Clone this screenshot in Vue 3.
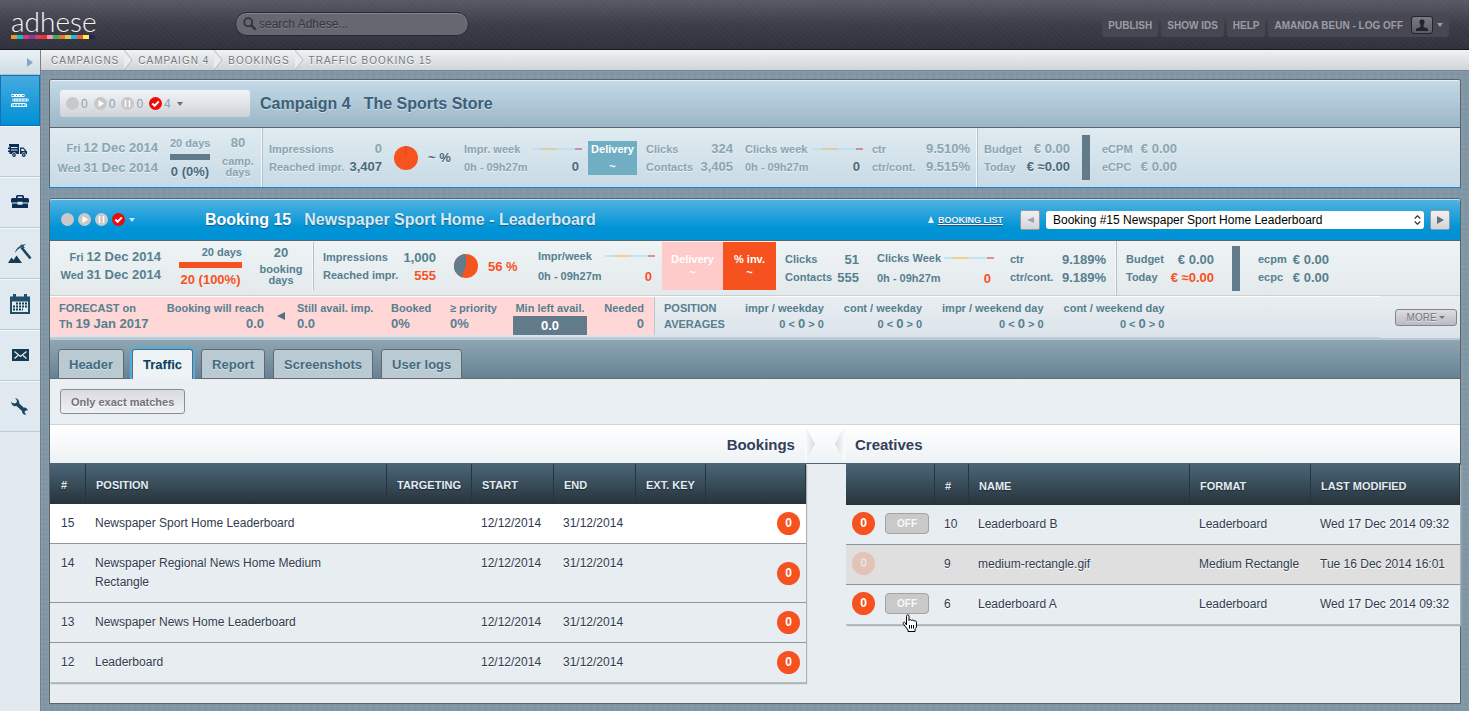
<script setup>
import { ref } from 'vue'

const search = ref('')
const selectedBooking = ref(15)

const crumbs = ['Campaigns', 'Campaign 4', 'Bookings', 'Traffic booking 15']
const tabs = ['Header', 'Traffic', 'Report', 'Screenshots', 'User logs']
const activeTab = ref('Traffic')

const stripes = [
  '#f7931e', '#00c4c4', '#ee2a7b', '#7f3f98', '#e0366d', '#ee3124', '#f48fb1',
  '#39b15a', '#f36f32', '#d9cf4a', '#1cbbe0', '#f15a3a', '#fff04d', '#262262'
]

const bookings = [
  { id: 15, position: 'Newspaper Sport Home Leaderboard' },
  { id: 14, position: 'Newspaper Regional News Home Medium Rectangle' },
  { id: 13, position: 'Newspaper News Home Leaderboard' },
  { id: 12, position: 'Leaderboard' }
]

const creatives = [
  { id: 10, name: 'Leaderboard B', format: 'Leaderboard', modified: 'Wed 17 Dec 2014 09:32', active: true },
  { id: 9, name: 'medium-rectangle.gif', format: 'Medium Rectangle', modified: 'Tue 16 Dec 2014 16:01', active: false },
  { id: 6, name: 'Leaderboard A', format: 'Leaderboard', modified: 'Wed 17 Dec 2014 09:32', active: true, hovered: true }
]

const averages = ['impr / weekday', 'cont / weekday', 'impr / weekend day', 'cont / weekend day']
const statuses = [
  { kind: 'idle', count: 0 },
  { kind: 'play', count: 0 },
  { kind: 'pause', count: 0 },
  { kind: 'done', count: 4 }
]
</script>

<template>
  <div class="app">
    <header class="topbar">
      <a class="logo" href="#">
        <span class="logo-name">adhese</span>
        <span class="logo-stripes"><i v-for="c in stripes" :key="c" :style="{ background: c }"></i></span>
      </a>
      <form class="search" @submit.prevent>
        <svg width="14" height="14" viewBox="0 0 14 14" fill="none" stroke="#33333b" aria-hidden="true">
          <circle cx="5.2" cy="5.2" r="4" stroke-width="1.8" />
          <path d="M8.3 8.3 12.6 12.6" stroke-width="2.6" />
        </svg>
        <input v-model="search" type="text" aria-label="Search" placeholder="search Adhese..." />
      </form>
      <nav class="topnav">
        <button type="button">PUBLISH</button>
        <button type="button">SHOW IDS</button>
        <button type="button">HELP</button>
        <button type="button" class="user">
          AMANDA BEUN - LOG OFF
          <span class="avatar">
            <svg width="14" height="13" viewBox="0 0 14 13" aria-hidden="true">
              <path d="M7 0.5c1.9 0 2.7 1.2 2.5 3-.1 1.3-1 2-1 2.700v1.800l4.500 1.800v2.200H1v-2.200l4.500-1.800V6.200c0-.7-.9-1.400-1-2.700C4.300 1.700 5.100.5 7 .5z" fill="#22222a" />
            </svg>
          </span>
          <span class="caret"></span>
        </button>
      </nav>
    </header>

    <div class="shell">
      <aside class="sidebar">
        <button class="toggle" type="button" aria-label="Expand menu">
          <svg width="6" height="9" viewBox="0 0 6 9"><path d="M0 0 6 4.500 0 9z" fill="#8aa5c8" /></svg>
        </button>
        <nav>
          <a href="#" class="active" aria-label="Campaigns">
            <svg width="18" height="15" viewBox="0 0 18 15">
              <g fill="none" stroke="#fff">
                <rect x="1" y="1.500" width="12" height="2" />
                <rect x="3.500" y="6" width="12" height="2" />
                <rect x="2" y="10.500" width="12" height="3" />
              </g>
              <path d="M3 2.500h8M5 7h9M4 12h8" stroke="#fff" stroke-dasharray="2 1" />
              <path d="M2 5.500v3M17 5.500v3M.5 10.500v3.500M15.500 10.500v3.500" stroke="#fff" />
            </svg>
          </a>
          <a href="#" aria-label="Deliveries">
            <svg width="24" height="14" viewBox="0 0 24 14" fill="#0b2c55">
              <path d="M1 0h10v10H8.500a2.500 2.500 0 0 0-4.800 0H1.500V8H0V6.500h1.500V5H0V3.500h1.500V2H1z" />
              <path d="M12 3.500h3.500L18.500 7l.5.500V10h-1a2.300 2.300 0 0 0-4.500 0H12z" />
              <circle cx="6" cy="11" r="1.900" /><circle cx="15.800" cy="11" r="1.900" />
              <path d="M13.200 4.700h1.900L17 7h-3.800zM3 3h6.500v.9H3zM3 5.500h6.500v.9H3z" fill="#e0eaf0" />
              <circle cx="6" cy="11" r=".7" fill="#e0eaf0" /><circle cx="15.800" cy="11" r=".7" fill="#e0eaf0" />
            </svg>
          </a>
          <a href="#" aria-label="Portfolio">
            <svg width="18" height="14" viewBox="0 0 18 14" fill="#0b2c55">
              <path d="M5 3V1.500Q5 0 6.500 0h5Q13 0 13 1.500V3h3.500Q18 3 18 4.500V7.500h-6.500v-.8h-5v.8H0v-3Q0 3 1.500 3zM6.700 3h4.600V1.600H6.700z" />
              <path d="M1 8.500h5.500v1.300h5V8.500H17V13H1z" />
            </svg>
          </a>
          <a href="#" aria-label="Mining">
            <svg width="24" height="21" viewBox="0 0 24 21">
              <path d="M0 20 3.500 14.500 5.500 17 8.500 12.500 14 20z" fill="#153a52" />
              <path d="M7 10C8 5.500 11 2.500 18 .8L14.500 4C11 5 9 7 7 10z" fill="#25566f" />
              <path d="M13.500 4.500 22.500 15.500" stroke="#1b455d" stroke-width="2.600" />
              <path d="M13 1.800 16 5.200" stroke="#25566f" stroke-width="2" />
            </svg>
          </a>
          <a href="#" aria-label="Calendar">
            <svg width="20" height="20" viewBox="0 0 20 20">
              <path d="M0 2.500h3V0h3v2.500h8V0h3v2.500h3V20H0z" fill="#1f4f69" />
              <path d="M2 7.500h16V18H2z" fill="#e4edf2" />
              <path d="M6 9.500h11M3 12.500h14M3 15.500h10" stroke="#153a52" stroke-width="2" stroke-dasharray="2 1" />
            </svg>
          </a>
          <a href="#" aria-label="Messages">
            <svg width="17" height="12" viewBox="0 0 17 12">
              <path d="M0 0h17v12H0z" fill="#153a52" />
              <path d="M2.500 2.500 8.500 7.500 14.500 2.500M2.500 9.500 6 6.500M14.500 9.500 11 6.500" fill="none" stroke="#e4edf2" stroke-width="1.300" />
            </svg>
          </a>
          <a href="#" aria-label="Settings">
            <svg width="19" height="17" viewBox="0 0 19 17">
              <path d="M4 .3 5.800 2v2.300L4.300 5.500 1.300 5 .3 3.500C-.2 6.500 2.500 8.800 5.500 8L11 13c0 2.500 2 4.200 4.500 3.600L13.800 15v-1.800l1.500-1 1.500.5c0-2.200-2-3.700-4.300-3.200L8.200 5.300C8.500 2.500 6.500.2 4 .3z" fill="#1a4560" />
            </svg>
          </a>
        </nav>
      </aside>

      <div class="content">
        <nav class="crumbs" aria-label="Breadcrumb">
          <template v-for="(c, i) in crumbs" :key="c">
            <svg v-if="i" class="crumb-sep" width="9" height="20" viewBox="0 0 9 20" aria-hidden="true">
              <path d="M0 0 8 10 0 20z" fill="#e9edef" /><path d="M0 0 8 10 0 20" fill="none" stroke="#b4babd" />
            </svg>
            <a href="#">{{ c }}</a>
          </template>
        </nav>

        <main>
          <section class="panel campaign">
            <header class="panel-head">
              <div class="status-box">
                <span v-for="s in statuses" :key="s.kind" class="status">
                  <svg width="13" height="13" viewBox="0 0 13 13">
                    <circle cx="6.500" cy="6.500" r="6.500" :fill="s.kind === 'done' ? '#ee0a0a' : '#c8c8c8'" />
                    <path v-if="s.kind === 'play'" d="M4.500 3 10 6.500 4.500 10z" fill="#fff" />
                    <path v-if="s.kind === 'pause'" d="M4.500 3v7M8.500 3v7" stroke="#fff" stroke-width="1.500" />
                    <path v-if="s.kind === 'done'" d="M3.300 6.500 5.600 8.800 9.800 4.400" fill="none" stroke="#fff" stroke-width="2" />
                  </svg>{{ s.count }}
                </span>
                <span class="caret"></span>
              </div>
              <h1><span>Campaign 4</span><span>The Sports Store</span></h1>
            </header>
            <div class="stats">
              <div class="dates"><p>Fri <b>12 Dec 2014</b></p><p>Wed <b>31 Dec 2014</b></p></div>
              <div class="progress"><p>20 days</p><i></i><p><b class="em">0 (0%)</b></p></div>
              <div class="total"><b>80</b><p>camp.<br />days</p></div>
              <div class="pair impressions ruled">
                <span>Impressions</span><b>0</b><span>Reached impr.</span><b class="em">3,407</b>
              </div>
              <svg class="pie" width="24" height="24" viewBox="0 0 24 24"><circle cx="12" cy="12" r="12" fill="#f6541f" /><path d="M12 0v10" stroke="#c2502c" /></svg>
              <b class="em percent">~ %</b>
              <div class="pair week">
                <span>Impr. week</span>
                <svg class="spark" width="50" height="2"><path d="M0 1h50" stroke="#a5dafa" /><path d="M9 1h16" stroke="#f7bd5b" /><path d="M43 1h7" stroke="#dd4150" /></svg>
                <span>0h - 09h27m</span><b class="em">0</b>
              </div>
              <div class="tile teal"><span>Delivery</span><span>~</span></div>
              <div class="pair clicks"><span>Clicks</span><b>324</b><span>Contacts</span><b>3,405</b></div>
              <div class="pair week">
                <span>Clicks week</span>
                <svg class="spark" width="50" height="2"><path d="M0 1h50" stroke="#a5dafa" /><path d="M9 1h16" stroke="#f7bd5b" /><path d="M43 1h7" stroke="#dd4150" /></svg>
                <span>0h - 09h27m</span><b class="em">0</b>
              </div>
              <div class="pair ctr"><span>ctr</span><b>9.510%</b><span>ctr/cont.</span><b>9.515%</b></div>
              <div class="pair budget ruled"><span>Budget</span><b>€ 0.00</b><span>Today</span><b class="em">€ ≈0.00</b></div>
              <i class="block"></i>
              <div class="pair ecp"><span>eCPM</span><b>€ 0.00</b><span>eCPC</span><b>€ 0.00</b></div>
            </div>
          </section>

          <section class="panel booking">
            <header class="panel-head">
              <div class="status-line">
                <svg v-for="s in statuses" :key="s.kind" width="13" height="13" viewBox="0 0 13 13">
                  <circle cx="6.500" cy="6.500" r="6.500" :fill="s.kind === 'done' ? '#ee0a0a' : '#c8c8c8'" />
                  <path v-if="s.kind === 'play'" d="M4.500 3 10 6.500 4.500 10z" fill="#fff" />
                  <path v-if="s.kind === 'pause'" d="M4.500 3v7M8.500 3v7" stroke="#fff" stroke-width="1.500" />
                  <path v-if="s.kind === 'done'" d="M3.300 6.500 5.600 8.800 9.800 4.400" fill="none" stroke="#fff" stroke-width="2" />
                </svg>
                <span class="caret"></span>
              </div>
              <h2><span>Booking 15</span><span>Newspaper Sport Home - Leaderboard</span></h2>
              <a class="list-link" href="#"><svg width="6" height="7" viewBox="0 0 6 7"><path d="M3 0 6 7H0z" fill="#e6f2f9" /></svg><span>BOOKING LIST</span></a>
              <button class="step" type="button" aria-label="Previous booking" disabled><svg width="7" height="6" viewBox="0 0 7 6"><path d="M7 0v6L0 3z" fill="#a2a2a8" /></svg></button>
              <div class="select">
                <select v-model="selectedBooking" aria-label="Booking">
                  <option v-for="b in bookings" :key="b.id" :value="b.id">Booking #{{ b.id }} {{ b.position }}</option>
                </select>
                <svg width="7" height="10" viewBox="0 0 7 10" fill="none" stroke="#333" stroke-width="1.200"><path d="M.7 3.500 3.500.8 6.300 3.500M.7 6.500 3.500 9.200 6.300 6.500" /></svg>
              </div>
              <button class="step" type="button" aria-label="Next booking"><svg width="7" height="8" viewBox="0 0 7 8"><path d="M0 0v8L7 4z" fill="#6b6e76" /></svg></button>
            </header>

            <div class="stats">
              <div class="lead">
                <div class="dates"><p>Fri <b>12 Dec 2014</b></p><p>Wed <b>31 Dec 2014</b></p></div>
                <div class="progress"><p>20 days</p><i></i><p><b class="em">20 (100%)</b></p></div>
                <div class="total"><b>20</b><p>booking<br />days</p></div>
                <div class="pair impressions ruled">
                  <span>Impressions</span><b>1,000</b><span>Reached impr.</span><b class="em">555</b>
                </div>
                <svg class="pie" width="24" height="24" viewBox="0 0 24 24"><circle cx="12" cy="12" r="12" fill="#f6541f" /><path d="M12 12V0a12 12 0 0 0-4.400 23.200z" fill="#627c8b" /></svg>
                <b class="em percent">56 %</b>
                <div class="pair week">
                  <span>Impr/week</span>
                  <svg class="spark" width="50" height="2"><path d="M0 1h50" stroke="#c3e4f7" stroke-width="2" /><path d="M9 1h16" stroke="#f1d08e" stroke-width="2" /><path d="M43 1h7" stroke="#e28f96" stroke-width="2" /></svg>
                  <span>0h - 09h27m</span><b class="em">0</b>
                </div>
                <div class="tile rose"><span>Delivery</span><span>~</span></div>
                <div class="tile orange"><span>% inv.</span><span>~</span></div>
              </div>
              <div class="pair clicks"><span>Clicks</span><b>51</b><span>Contacts</span><b>555</b></div>
              <div class="pair week">
                <span>Clicks Week</span>
                <svg class="spark" width="50" height="2"><path d="M0 1h50" stroke="#c3e4f7" stroke-width="2" /><path d="M9 1h16" stroke="#f1d08e" stroke-width="2" /><path d="M43 1h7" stroke="#e28f96" stroke-width="2" /></svg>
                <span>0h - 09h27m</span><b class="em">0</b>
              </div>
              <div class="pair ctr"><span>ctr</span><b>9.189%</b><span>ctr/cont.</span><b>9.189%</b></div>
              <div class="pair budget ruled"><span>Budget</span><b>€ 0.00</b><span>Today</span><b class="em">€ ≈0.00</b></div>
              <i class="block"></i>
              <div class="pair ecp"><span>ecpm</span><b>€ 0.00</b><span>ecpc</span><b>€ 0.00</b></div>
            </div>

            <div class="outlook">
              <div class="outlook-main">
                <div class="forecast">
                  <div class="f-date"><span>FORECAST on</span><span>Th <b>19 Jan 2017</b></span></div>
                  <div class="f-reach"><span>Booking will reach</span><b>0.0</b></div>
                  <svg width="8" height="8" viewBox="0 0 8 8"><path d="M8 0v8L0 4z" fill="#507384" /></svg>
                  <div class="f-avail"><span>Still avail. imp.</span><b>0.0</b></div>
                  <div class="f-booked"><span>Booked</span><b>0%</b></div>
                  <div class="f-priority"><span>≥ priority</span><b>0%</b></div>
                  <div class="f-min"><span>Min left avail.</span><b>0.0</b></div>
                  <div class="f-needed"><span>Needed</span><b>0</b></div>
                </div>
                <div class="averages">
                  <div class="a-label"><span>POSITION</span><span>AVERAGES</span></div>
                  <div v-for="a in averages" :key="a" class="a-item"><span>{{ a }}</span><span>0 &lt; <b>0</b> &gt; 0</span></div>
                </div>
              </div>
              <button class="more" type="button">MORE <span class="caret"></span></button>
            </div>

            <div class="tabs" role="tablist">
              <button v-for="t in tabs" :key="t" type="button" role="tab" :aria-selected="t === activeTab" :class="{ active: t === activeTab }" @click="activeTab = t">{{ t }}</button>
            </div>

            <div class="toolbar"><button type="button">Only exact matches</button></div>

            <div class="headings">
              <h3 class="left">Bookings</h3>
              <div class="chevrons" aria-hidden="true">
                <svg width="10" height="38" viewBox="0 0 10 38">
                  <defs><linearGradient id="chev-r"><stop offset="0" stop-color="#fbfcfd" /><stop offset="1" stop-color="#d5dde2" /></linearGradient></defs>
                  <path d="M0 0 10 19 0 38z" fill="url(#chev-r)" />
                </svg>
                <svg width="10" height="38" viewBox="0 0 10 38">
                  <defs><linearGradient id="chev-l"><stop offset="0" stop-color="#d5dde2" /><stop offset="1" stop-color="#fbfcfd" /></linearGradient></defs>
                  <path d="M10 0 0 19 10 38z" fill="url(#chev-l)" />
                </svg>
              </div>
              <h3 class="right">Creatives</h3>
            </div>

            <div class="tables">
              <div class="left">
                <table>
                  <colgroup><col class="w-id" /><col /><col class="w-target" /><col class="w-date" /><col class="w-date" /><col class="w-key" /><col class="w-last" /></colgroup>
                  <thead><tr><th>#</th><th>POSITION</th><th>TARGETING</th><th>START</th><th>END</th><th>EXT. KEY</th><th></th></tr></thead>
                  <tbody>
                    <tr v-for="b in bookings" :key="b.id" :class="{ selected: b.id === selectedBooking }">
                      <td>{{ b.id }}</td><td class="position">{{ b.position }}</td><td></td><td>12/12/2014</td><td>31/12/2014</td><td></td>
                      <td class="end"><span class="badge">0</span></td>
                    </tr>
                  </tbody>
                </table>
              </div>
              <div class="right">
                <table>
                  <colgroup><col class="w-actions" /><col class="w-num" /><col /><col class="w-format" /><col class="w-modified" /></colgroup>
                  <thead><tr><th></th><th>#</th><th>NAME</th><th>FORMAT</th><th>LAST MODIFIED</th></tr></thead>
                  <tbody>
                    <tr v-for="c in creatives" :key="c.id" :class="{ inactive: !c.active }">
                      <td class="actions">
                        <div class="action-row">
                          <span class="badge">0</span>
                          <button v-if="c.active" type="button">OFF</button>
                          <svg v-if="c.hovered" class="pointer" width="16" height="18" viewBox="0 0 16 18">
                            <path d="M4.500 11V2.300C4.500.3 7 .3 7 2.300V6.500c.3-1.300 2.400-1.200 2.500.2.500-1.100 2.400-.9 2.500.5.600-.8 2.500-.4 2.500 1V12c0 1.500-1 2.500-1.500 3.500V17.500H6V16C4.500 14 3 12 1.300 9.800.6 8.500 2.300 7.600 3.300 8.800z" fill="#fff" stroke="#000" stroke-linejoin="round" />
                            <path d="M7.500 11v3.500M9.500 11v3.500M11.500 11v3.500" stroke="#000" />
                          </svg>
                        </div>
                      </td>
                      <td>{{ c.id }}</td><td>{{ c.name }}</td><td>{{ c.format }}</td><td>{{ c.modified }}</td>
                    </tr>
                  </tbody>
                </table>
              </div>
            </div>
          </section>
        </main>
      </div>
    </div>
  </div>
</template>

<style>
body { margin: 0; }
</style>

<style scoped>
* { box-sizing: border-box; }
.app {
  min-height: 100vh;
  display: flex;
  flex-direction: column;
  font-family: "Liberation Sans", Arial, Helvetica, sans-serif;
  font-size: 11px;
  color: #55808f;
}
h1, h2, h3, p { margin: 0; }
button { font-family: inherit; padding: 0; border: 0; background: none; }
a { color: inherit; text-decoration: none; }
svg { display: block; flex: none; }
.caret {
  display: inline-block;
  border: 3px solid transparent;
  border-top: 4px solid currentColor;
  border-bottom: 0;
}

/* top bar */
.topbar {
  height: 50px;
  display: flex;
  align-items: flex-start;
  border-bottom: 1px solid #16161e;
  background:
    repeating-linear-gradient(45deg, rgba(255, 255, 255, 0.02) 0 2px, transparent 2px 4px),
    linear-gradient(#595965, #3b3c47 50%, #2e303b);
}
.logo { width: 84px; margin: 6px 0 0 11px; }
.logo-name {
  display: block;
  height: 29px;
  font: 300 28px/30px Lato, sans-serif;
  color: #f4f4f6;
}
.logo-stripes { display: flex; height: 4px; }
.logo-stripes i { flex: 1; }
.search {
  width: 234px;
  height: 24px;
  margin: 12px 0 0 140px;
  padding: 0 7px;
  display: flex;
  align-items: center;
  gap: 2px;
  border: 1px solid #26262e;
  border-radius: 12px;
  background: #676770;
  box-shadow: inset 0 1px 0 #85858d;
}
.search input {
  flex: 1;
  min-width: 0;
  padding: 0;
  border: 0;
  outline: 0;
  background: none;
  font: 12px "Liberation Sans", Arial, sans-serif;
  color: #34343b;
}
.search input::placeholder { color: #34343b; opacity: 1; text-shadow: 0 1px 0 #7e7e86; }
.topnav { margin: 13px 20px 0 auto; display: flex; gap: 3px; }
.topnav button {
  height: 24px;
  padding: 0 6px;
  display: flex;
  align-items: center;
  border-radius: 3px;
  background: #464751;
  font-size: 10px;
  font-weight: bold;
  color: #9a9ca8;
}
.avatar {
  width: 22px;
  height: 18px;
  margin: 0 4px 0 8px;
  display: flex;
  align-items: center;
  justify-content: center;
  border: 1px solid #24242c;
  border-radius: 3px;
  background: linear-gradient(#7a7a82, #5c5c65);
}

/* frame */
.shell { flex: 1; display: flex; }
.sidebar { width: 41px; border-right: 1px solid #76818f; background: #dfe9ef; }
.toggle {
  width: 100%;
  height: 25px;
  padding-right: 7px;
  display: flex;
  align-items: center;
  justify-content: flex-end;
  border-bottom: 1px solid #b9bfc4;
  background: linear-gradient(#eaf1f5, #cfdde6);
}
.sidebar nav a {
  height: 51px;
  display: flex;
  align-items: center;
  justify-content: center;
  border-bottom: 1px solid #b3cddb;
  box-shadow: inset 0 1px 0 #f3f8fa;
}
.sidebar nav a.active {
  border: 1px solid #0f74b4;
  background: linear-gradient(#45aae0, #0090d4);
  box-shadow: none;
}
.content { flex: 1; min-width: 0; display: flex; flex-direction: column; }
.crumbs {
  height: 21px;
  padding-left: 10px;
  display: flex;
  align-items: center;
  border-bottom: 1px solid #7d8390;
  background: linear-gradient(#f0f3f4, #cfd4d7);
  font-size: 10px;
  letter-spacing: 1px;
  text-transform: uppercase;
  color: #74787b;
  text-shadow: 0 1px 0 #fff;
}
.crumb-sep { margin: 0 5px; }
main {
  flex: 1;
  padding: 8px 8px 7px;
  display: flex;
  flex-direction: column;
  gap: 10px;
  background:
    repeating-linear-gradient(90deg, rgba(255, 255, 255, 0.04) 0 1px, transparent 1px 3px, rgba(40, 70, 90, 0.04) 3px 4px, transparent 4px 7px),
    repeating-linear-gradient(rgba(255, 255, 255, 0.03) 0 1px, transparent 1px 3px, rgba(40, 70, 90, 0.04) 3px 4px, transparent 4px 5px),
    #8197a6;
}
.panel { border: 1px solid #5d6468; border-radius: 3px 3px 0 0; }
.panel-head { display: flex; align-items: center; box-shadow: inset 0 1px 0 rgba(255, 255, 255, 0.6); border-radius: 2px 2px 0 0; border-bottom: 1px solid #5d6468; }
.panel-head h1, .panel-head h2 { display: flex; gap: 13px; font-size: 16px; line-height: 20px; white-space: nowrap; }

/* shared statistics strip */
.stats { display: flex; align-items: center; font-weight: bold; white-space: nowrap; }
.stats b, .outlook b { font-size: 13px; }
.stats > *, .lead > * { flex: none; }
.dates { text-align: right; }
.progress { text-align: center; line-height: 13px; }
.progress i { display: block; height: 6px; margin: 4px 0 5px; }
.total { text-align: center; line-height: 11px; }
.total b { display: block; }
.pair {
  display: grid;
  grid-template-columns: auto auto;
  grid-auto-rows: 18px;
  justify-content: space-between;
  align-content: center;
  align-items: center;
}
.pair b { text-align: right; }
.week b { padding-right: 3px; }
.block { background: #627b8a; height: 45px; }
.tile { display: flex; flex-direction: column; align-items: center; color: #fff; }

/* campaign */
.campaign { border-bottom-color: #1a86c4; }
.campaign .panel-head { height: 48px; padding-left: 10px; gap: 10px; background: linear-gradient(#c6dae7, #9ab6c8); }
.campaign h1 { color: #3b6078; text-shadow: 0 1px 0 #cfe0ea; }
.status-box {
  width: 190px;
  height: 27px;
  padding-left: 6px;
  display: flex;
  align-items: center;
  gap: 6px;
  border-radius: 3px;
  background: linear-gradient(#f2f3f6, #cfd3d9);
  font-size: 12px;
  color: #8da3af;
}
.status { display: flex; align-items: center; gap: 2px; }
.status-box .caret { color: #6d7079; }
.campaign .stats {
  height: 59px;
  background: linear-gradient(#e0ebf0, #c8dae6);
  color: #8aa5b0;
  text-shadow: 0 1px 0 #e9f1f5;
}
.campaign .em { color: #4a6a7b; }
.campaign .dates { width: 108px; line-height: 20px; }
.campaign .progress { width: 40px; margin-left: 12px; }
.campaign .progress i { background: #627b8a; }
.campaign .total { width: 40px; margin-left: 8px; }
.campaign .total b { margin-bottom: 8px; }
.ruled { border-left: 1px solid #b4c1c8; box-shadow: -1px 0 0 #f4f8fa; align-self: stretch; }
.campaign .impressions { width: 120px; margin-left: 4px; padding-left: 6px; }
.campaign .pie { margin-left: 12px; }
.campaign .percent { margin-left: 10px; width: 24px; }
.campaign .week { width: 118px; margin-left: 12px; }
.campaign .teal { width: 49px; height: 34px; margin-left: 6px; line-height: 17px; background: #70afc3; text-shadow: none; }
.campaign .clicks { width: 87px; margin-left: 9px; }
.campaign .ctr { width: 98px; margin-left: 9px; }
.campaign .budget { width: 93px; margin-left: 7px; padding-left: 6px; }
.campaign .block { width: 8px; margin-left: 12px; }
.campaign .ecp { width: 75px; margin-left: 12px; }

/* booking */
.booking { flex: 1; display: flex; flex-direction: column; background: linear-gradient(#eef3f6, #e7edf0 60%); }
.booking .panel-head { height: 42px; padding: 0 10px 0 11px; background: linear-gradient(#52b2e3, #0094d6 70%, #0090d4); }
.booking h2 { color: #fff; text-shadow: 0 1px 1px #1b5b80; }
.booking h2 span + span { color: #d6e9f3; }
.status-line { width: 144px; display: flex; align-items: center; gap: 4px; }
.status-line .caret { color: #cbe7f6; }
.list-link { margin-left: auto; display: flex; align-items: center; gap: 4px; font-size: 9px; font-weight: bold; color: #eef7fc; text-shadow: 0 1px 0 #1b5b80; }
.list-link span { text-decoration: underline; }
.step {
  width: 20px;
  height: 20px;
  display: flex;
  align-items: center;
  justify-content: center;
  border: 1px solid #8f99a3;
  border-radius: 2px;
  background: linear-gradient(#f1f1f4, #d3d4da);
}
.list-link + .step { margin-left: 17px; }
.select { position: relative; width: 378px; margin: 0 6px; }
.select select {
  display: block;
  width: 100%;
  height: 18px;
  padding: 0 20px 0 7px;
  appearance: none;
  border: 0;
  border-radius: 3px;
  background: #fff;
  font: 12px "Liberation Sans", Arial, sans-serif;
  color: #000;
}
.select svg { position: absolute; right: 3px; top: 4px; pointer-events: none; }
.booking .stats { height: 55px; border-bottom: 1px solid #c6d1d6; background: linear-gradient(#eef3f6, #e4eaec); }
.booking .em { color: #f6521f; }
.lead { align-self: flex-start; display: flex; align-items: center; height: 48px; margin-top: 1px; }
.booking .dates { width: 111px; line-height: 17px; }
.booking .progress { width: 63px; margin-left: 18px; }
.booking .progress i { margin: 3px 0 5px; background: #f6521f; }
.booking .progress p:first-child { text-align: right; }
.booking .total { width: 48px; margin-left: 15px; }
.booking .total b { margin-bottom: 6px; }
.booking .impressions { width: 123px; margin-left: 8px; padding-left: 9px; }
.booking .pie { margin-left: 18px; }
.booking .percent { width: 32px; margin-left: 10px; }
.booking .week { width: 117px; margin-left: 18px; grid-auto-rows: 20px; }
.booking .tile { height: 48px; line-height: 13px; justify-content: center; }
.booking .rose { width: 61px; margin-left: 7px; background: #ffcaca; }
.booking .orange { width: 53px; background: #f6521f; }
.booking .clicks { width: 74px; margin-left: 9px; }
.booking .ctr { width: 96px; margin-left: 16px; }
.booking .budget { width: 98px; margin-left: 10px; padding-left: 9px; }
.booking .block { width: 8px; margin-left: 18px; }
.booking .ecp { width: 71px; margin-left: 18px; }

/* forecast and position averages */
.outlook { display: flex; align-items: center; background: linear-gradient(#e9eef1, #dbe3ea); font-weight: bold; white-space: nowrap; }
.outlook-main { flex: 1; min-width: 0; height: 42px; display: flex; border-top: 1px solid #fff; border-bottom: 1px solid #c3d0da; }
.forecast { width: 604px; height: 38px; padding: 3px 0 0 9px; display: flex; background: #ffd7d7; }
.forecast > div, .averages > div { flex: none; display: flex; flex-direction: column; line-height: 16px; }
.forecast > svg { margin: 12px 12px 0 13px; }
.f-date { width: 100px; }
.f-reach { width: 105px; text-align: right; }
.f-avail { width: 94px; }
.f-booked { width: 59px; }
.f-priority { width: 63px; }
.f-min { width: 74px; text-align: center; }
.f-min b { height: 19px; line-height: 19px; background: #627b8a; color: #fff; }
.f-needed { width: 57px; text-align: right; }
.averages { height: 38px; padding: 3px 0 0 9px; display: flex; gap: 20px; border-left: 1px solid #b9c8d0; }
.a-item { text-align: right; }
.more {
  width: 62px;
  height: 17px;
  margin: 0 3px 0 15px;
  border: 1px solid #83858e;
  border-radius: 3px;
  background: linear-gradient(#dcdde0, #b9bbc1);
  font-size: 10px;
  color: #74767e;
  text-shadow: 0 1px 0 #e8e8ea;
}
.more .caret { vertical-align: 2px; border-width: 3px 3px 0; }

/* tabs */
.tabs {
  height: 41px;
  padding-left: 8px;
  display: flex;
  align-items: flex-end;
  gap: 8px;
  border-top: 2px solid #bccad4;
  box-shadow: inset 0 -1px 0 #5f6c73;
  background: linear-gradient(#8fa5b3, #648294);
}
.tabs button {
  height: 30px;
  padding: 0 10px;
  border: 1px solid #67676b;
  border-radius: 3px 3px 0 0;
  background: #b9cad3;
  font-size: 13px;
  font-weight: bold;
  color: #466a80;
  text-shadow: 0 1px 0 #d4e0e6;
}
.tabs button.active { border-bottom: 0; background: #eef3f6; color: #0c3f60; box-shadow: 0 -2px 0 #4caee4, -2px 0 0 #4caee4, 2px 0 0 #4caee4; clip-path: inset(-3px -3px 0 -3px); }
.toolbar { height: 45px; padding: 10px 10px 0; }
.toolbar button {
  height: 25px;
  padding: 0 10px;
  border: 1px solid #85919a;
  border-radius: 3px;
  background: linear-gradient(#dadbe0, #f0f1f4);
  font-size: 11px;
  font-weight: bold;
  color: #6f717b;
  text-shadow: 0 1px 0 #fff;
}
.headings { height: 40px; display: flex; align-items: center; border-top: 1px solid #c7d7df; border-bottom: 1px solid #4b6575; background: linear-gradient(#fff, #eef2f4); }
.headings h3 { font-size: 15px; color: #34405a; }
.left { flex: 756 1 0; min-width: 0; }
.right { flex: 614 1 0; min-width: 0; }
.headings .left { padding-right: 10px; text-align: right; }
.headings .right { padding-left: 10px; }
.chevrons { width: 40px; display: flex; justify-content: space-between; }

/* tables */
.tables { display: flex; align-items: flex-start; gap: 40px; }
table { width: 100%; table-layout: fixed; border-collapse: separate; border-spacing: 0; box-shadow: 1px 1px 1px #a9b3b8; font-size: 12px; color: #303a4e; }
th {
  height: 40px;
  padding: 2px 10px 0;
  text-align: left;
  font-size: 11px;
  color: #e3ecf2;
  text-shadow: 0 1px 1px #1c262c;
  white-space: nowrap;
  background: linear-gradient(#4b6677, #26333b);
  border-right: 1px solid #26343c;
}
.right th { height: 41px; }
td { padding: 10px 9px; line-height: 19px; vertical-align: top; border-bottom: 1px solid #8d969b; text-shadow: 0 1px 0 #fff; white-space: nowrap; }
.left td:first-child { padding-left: 11px; }
.left th:first-child { padding-left: 11px; }
.left td.position { padding-right: 60px; white-space: normal; }
tr:last-child td { border-bottom-color: #b5bfc4; }
.selected td { background: #fff; }
.inactive td { background: #dfdfdf; }
td.end { padding: 0 6px 0 0; vertical-align: middle; }
td.end .badge { margin-left: auto; }
td.actions { padding: 7px 0 0 6px; }
.action-row { position: relative; display: flex; align-items: center; }
.action-row button {
  width: 44px;
  height: 21px;
  margin-left: 10px;
  border: 1px solid #a3a3a3;
  border-radius: 4px;
  background: #c9c9c9;
  font-size: 10px;
  font-weight: bold;
  color: #f8f8f8;
}
.pointer { position: absolute; left: 50px; top: 22px; }
.badge {
  display: block;
  width: 23px;
  height: 23px;
  border-radius: 50%;
  background: #f6521f;
  font-size: 12px;
  font-weight: bold;
  line-height: 23px;
  text-align: center;
  color: #fff;
  text-shadow: none;
}
.inactive .badge { opacity: 0.2; }
.w-id { width: 36px; }
.w-target { width: 85px; }
.w-date { width: 82px; }
.w-key { width: 70px; }
.w-last { width: 100px; }
.w-actions { width: 89px; }
.w-num { width: 34px; }
.w-format { width: 121px; }
.w-modified { width: 149px; }
</style>
